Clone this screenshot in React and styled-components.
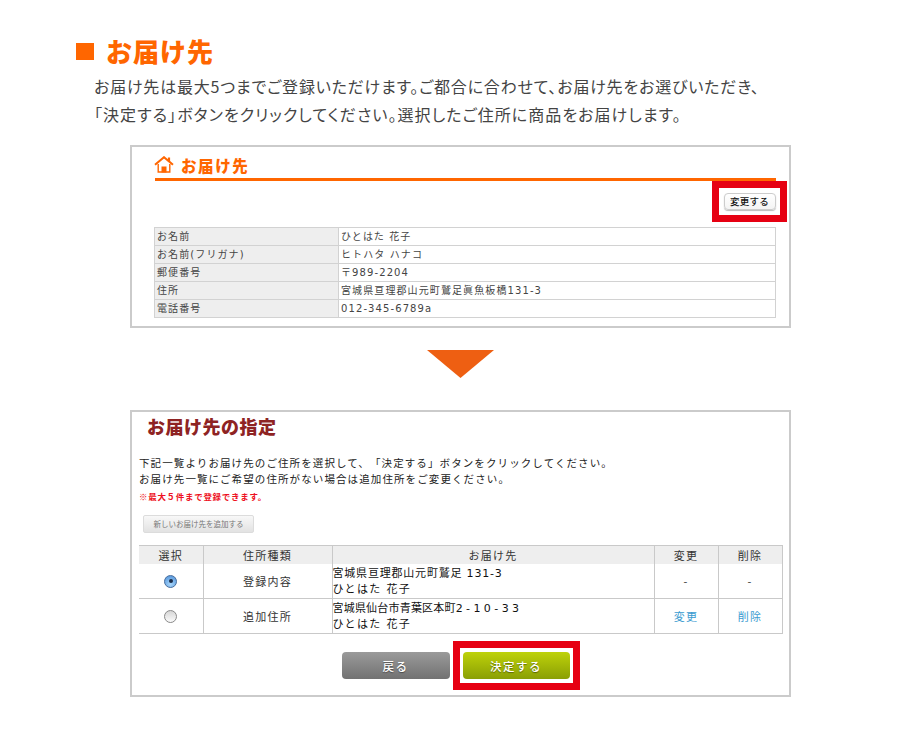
import React from 'react';
import styled, { createGlobalStyle } from 'styled-components';

const GlobalStyle = createGlobalStyle`
  html, body {
    margin: 0;
    padding: 0;
    background: #fff;
  }

  body {
    font-family: 'Noto Sans CJK JP', 'Liberation Sans', sans-serif;
    color: #333;
  }
`;

const Page = styled.div`
  width: 900px;
  height: 741px;
  overflow: hidden;
  padding-top: 34px;
  box-sizing: border-box;
`;

const PageTitle = styled.h1`
  display: flex;
  align-items: center;
  gap: 12px;
  margin: 0 0 0 76px;
  height: 34px;
  font-size: 26px;
  line-height: 34px;
  font-weight: 900;
  letter-spacing: 1px;
  color: #ff6600;

  &:before {
    content: '';
    width: 18px;
    height: 17px;
    background: #ff6600;
  }
`;

const Lead = styled.p`
  margin: 4px 0 0 94px;
  font-size: 16px;
  line-height: 28px;
  color: #444;
  font-feature-settings: 'palt';
  white-space: nowrap;
`;

const LeadLine = styled.span`
  display: block;
  letter-spacing: ${({ $gap }) => $gap}px;
`;

const Panel = styled.section`
  width: 661px;
  box-sizing: border-box;
  margin: 0 0 0 130px;
  border: 2px solid #cbcbcb;
  background: #fff;
`;

const SummaryPanel = styled(Panel)`
  height: 183px;
  margin-top: 17px;
  padding: 6px 2px 0 22px;
`;

const SummaryHead = styled.h2`
  display: flex;
  align-items: center;
  gap: 7px;
  width: 621px;
  height: 23px;
  margin: 0 0 0 1px;
  padding-bottom: 2px;
  border-bottom: 3px solid #ff6600;
  font-size: 15.5px;
  font-weight: 900;
  letter-spacing: 1.6px;
  color: #ff6600;

  svg {
    margin-left: -1px;
  }
`;

const ActionRow = styled.div`
  display: flex;
  justify-content: flex-end;
`;

const Highlight = styled.div`
  display: flex;
  align-items: center;
  justify-content: center;
  box-sizing: border-box;
  width: ${({ $w }) => $w}px;
  height: ${({ $h }) => $h}px;
  border: 7px solid #e60012;
`;

const MiniButton = styled.button`
  width: 52px;
  height: 17px;
  padding: 0;
  border: 1px solid #ccc;
  border-radius: 4px;
  background: linear-gradient(#fff, #f4f4f4);
  box-shadow: 0 1px 1px #bbb;
  font: 500 9.5px/15px 'Noto Sans CJK JP', sans-serif;
  letter-spacing: 0.3px;
  color: #111;
`;

const InfoTable = styled.table`
  width: 622px;
  margin-top: 5px;
  border-collapse: collapse;
  table-layout: fixed;
  font-family: 'DejaVu Sans', 'Noto Sans CJK JP', sans-serif;
  font-size: 10px;
  letter-spacing: 1.1px;
  color: #444;

  th, td {
    height: 17px;
    padding: 0 0 0 2px;
    border: 1px solid #d2d2d2;
    line-height: 16px;
    text-align: left;
    font-weight: 400;
    white-space: nowrap;
  }

  th {
    width: 181px;
    background: #eee;
  }
`;

const ArrowWrap = styled.div`
  display: flex;
  justify-content: center;
  height: 82px;
  padding: 22px 0 0 21px;
  box-sizing: border-box;
`;

const SelectPanel = styled(Panel)`
  height: 287px;
  padding: 0 7px;
`;

const SelectTitle = styled.h2`
  margin: 0 0 0 8px;
  padding-top: 2px;
  height: 40px;
  box-sizing: border-box;
  font-size: 18px;
  line-height: 24px;
  font-weight: 900;
  letter-spacing: 0.5px;
  color: #8e2323;
`;

const Guide = styled.p`
  margin: 3px 0 0;
  font-size: 10.5px;
  line-height: 16px;
  letter-spacing: 1.1px;
  color: #222;
  white-space: nowrap;
  text-spacing-trim: space-all;
`;

const Note = styled.p`
  margin: 1px 0 0;
  font-size: 8.5px;
  line-height: 16px;
  font-weight: 700;
  letter-spacing: 0.7px;
  color: #ee1122;
`;

const AddButton = styled.button`
  display: block;
  width: 111px;
  height: 18px;
  margin: 11px 0 12px 4px;
  padding: 0;
  border: 1px solid #dcdcdc;
  border-radius: 2px;
  background: linear-gradient(#f8f8f8, #e2e2e2);
  font: 400 7.5px/16px 'Noto Sans CJK JP', sans-serif;
  color: #777;
`;

const AddressTable = styled.table`
  width: 643px;
  border-collapse: collapse;
  table-layout: fixed;
  font-size: 11px;
  letter-spacing: 1.2px;
  color: #333;

  th, td {
    border: 1px solid #c9c9c9;
    text-align: center;
    padding: 0;
  }

  th {
    height: 17px;
    padding-bottom: 1px;
    background: #eee;
    font-weight: 400;
    line-height: 16px;
    border-bottom: 0;
  }

  td {
    height: 34px;
  }

  tbody tr:first-child td {
    border-top: 0;
  }

  tr > *:first-child {
    border-left: 0;
  }
`;

const AddressCell = styled.td`
  && {
    height: 33px;
    padding-top: 1px;
    text-align: left;
    line-height: 16px;
    color: #111;
    white-space: nowrap;
  }
`;

const AddressLine = styled.span`
  display: block;
  font-family: 'DejaVu Sans', 'Noto Sans CJK JP', sans-serif;
  letter-spacing: ${({ $gap }) => $gap}px;
`;

const AddressNumber = styled.span`
  letter-spacing: 3.4px;
`;

const Radio = styled.span`
  display: block;
  position: relative;
  width: 13px;
  height: 13px;
  margin: 0 auto;
  border-radius: 50%;
  border: 1px solid ${({ $checked }) => ($checked ? '#4a6f9e' : '#8a8a8a')};
  background: ${({ $checked }) =>
    $checked
      ? 'radial-gradient(circle at 50% 75%, #a8d6fb, #4c8fd8)'
      : 'linear-gradient(#d6d6d6, #fbfbfb)'};
  box-sizing: border-box;

  &:after {
    content: '';
    display: ${({ $checked }) => ($checked ? 'block' : 'none')};
    position: absolute;
    top: 3.5px;
    left: 3.5px;
    width: 4px;
    height: 4px;
    border-radius: 50%;
    background: #1c2d4a;
  }
`;

const LinkText = styled.a`
  color: #3a9bd0;
`;

const ButtonRow = styled.div`
  display: flex;
  justify-content: center;
  align-items: center;
  gap: 3px;
  margin-top: 7px;
`;

const BigButton = styled.button`
  width: ${({ $tone }) => ($tone === 'green' ? 107 : 108)}px;
  height: 27px;
  padding: 0;
  border: 0;
  border-radius: 4px;
  background: ${({ $tone }) =>
    $tone === 'green'
      ? 'linear-gradient(#bed20a, #8a9f05)'
      : 'linear-gradient(#9a9a9a, #727272)'};
  font: 500 11.5px/26px 'Noto Sans CJK JP', sans-serif;
  letter-spacing: 1.5px;
  color: #fff;
  text-shadow: 0 1px 1px rgba(0, 0, 0, 0.4);
`;

const HouseIcon = () => (
  <svg width="20" height="17" viewBox="0 0 20 17" fill="none">
    <path d="M1 8.8 10 1.2 19 8.8" stroke="#ff6600" strokeWidth="2" />
    <path d="M15 1.5v4" stroke="#ff6600" strokeWidth="2.2" />
    <path d="M4.2 8v8h11.6V8" stroke="#ff6600" strokeWidth="1.4" />
    <rect x="7.5" y="10.5" width="5" height="6" fill="#ff6600" />
  </svg>
);

const ArrowIcon = () => (
  <svg width="67" height="28" viewBox="0 0 67 28">
    <path d="M0 0h67L33.5 28z" fill="#ee5f12" />
  </svg>
);

const profile = [
  ['お名前', 'ひとはた 花子'],
  ['お名前(フリガナ)', 'ヒトハタ ハナコ'],
  ['郵便番号', '〒989-2204'],
  ['住所', '宮城県亘理郡山元町鷲足眞魚板橋131-3'],
  ['電話番号', '012-345-6789a'],
];

const App = () => (
  <Page>
    <GlobalStyle />
    <PageTitle>お届け先</PageTitle>
    <Lead>
      <LeadLine $gap={0.8}>
        お届け先は最大5つまでご登録いただけます。ご都合に合わせて、お届け先をお選びいただき、
      </LeadLine>
      <LeadLine $gap={1.05}>
        「決定する」ボタンをクリックしてください。選択したご住所に商品をお届けします。
      </LeadLine>
    </Lead>

    <SummaryPanel>
      <SummaryHead>
        <HouseIcon />
        お届け先
      </SummaryHead>
      <ActionRow>
        <Highlight $w={75} $h={41}>
          <MiniButton>変更する</MiniButton>
        </Highlight>
      </ActionRow>
      <InfoTable>
        <tbody>
          {profile.map(([label, value]) => (
            <tr key={label}>
              <th>{label}</th>
              <td>{value}</td>
            </tr>
          ))}
        </tbody>
      </InfoTable>
    </SummaryPanel>

    <ArrowWrap>
      <ArrowIcon />
    </ArrowWrap>

    <SelectPanel>
      <SelectTitle>お届け先の指定</SelectTitle>
      <Guide>
        下記一覧よりお届け先のご住所を選択して、「決定する」ボタンをクリックしてください。
        <br />
        お届け先一覧にご希望の住所がない場合は追加住所をご変更ください。
      </Guide>
      <Note>※最大５件まで登録できます。</Note>
      <AddButton>新しいお届け先を追加する</AddButton>
      <AddressTable>
        <colgroup>
          <col width="64" />
          <col width="129" />
          <col width="322" />
          <col width="64" />
          <col width="64" />
        </colgroup>
        <thead>
          <tr>
            <th>選択</th>
            <th>住所種類</th>
            <th>お届け先</th>
            <th>変更</th>
            <th>削除</th>
          </tr>
        </thead>
        <tbody>
          <tr>
            <td><Radio $checked /></td>
            <td>登録内容</td>
            <AddressCell>
              <AddressLine $gap={0.8}>宮城県亘理郡山元町鷲足 131-3</AddressLine>
              <AddressLine $gap={1.4}>ひとはた 花子</AddressLine>
            </AddressCell>
            <td>-</td>
            <td>-</td>
          </tr>
          <tr>
            <td><Radio /></td>
            <td>追加住所</td>
            <AddressCell>
              <AddressLine $gap={0.2}>
                宮城県仙台市青葉区本町<AddressNumber>2-10-33</AddressNumber>
              </AddressLine>
              <AddressLine $gap={1.4}>ひとはた 花子</AddressLine>
            </AddressCell>
            <td><LinkText>変更</LinkText></td>
            <td><LinkText>削除</LinkText></td>
          </tr>
        </tbody>
      </AddressTable>
      <ButtonRow>
        <BigButton>戻る</BigButton>
        <Highlight $w={127} $h={49}>
          <BigButton $tone="green">決定する</BigButton>
        </Highlight>
      </ButtonRow>
    </SelectPanel>
  </Page>
);

export default App;
